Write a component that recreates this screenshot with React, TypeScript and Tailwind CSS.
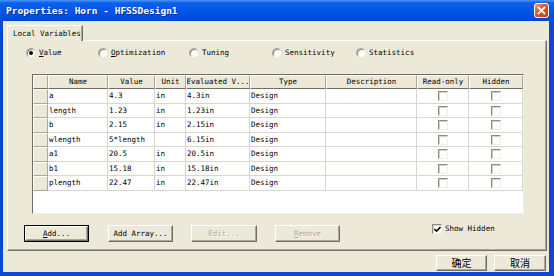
import React from "react";

const mono = "font-['DejaVu_Sans_Mono','Liberation_Mono',monospace]";

const cols = "grid-cols-[15px_60px_47px_31px_64px_76px_91px_52px_54px]";

const rows = [
  ["a", "4.3", "in", "4.3in", "Design"],
  ["length", "1.23", "in", "1.23in", "Design"],
  ["b", "2.15", "in", "2.15in", "Design"],
  ["wlength", "5*length", "", "6.15in", "Design"],
  ["a1", "20.5", "in", "20.5in", "Design"],
  ["b1", "15.18", "in", "15.18in", "Design"],
  ["plength", "22.47", "in", "22.47in", "Design"],
];

const rowHeights = ["h-[15px]", "h-[14px]", "h-[15px]", "h-[14px]", "h-[15px]", "h-[14px]", "h-[15px]"];

const headers = ["Name", "Value", "Unit", "Evaluated V...", "Type", "Description", "Read-only", "Hidden"];

const Radio = ({ label, u, checked, width }: { label: string; u?: boolean; checked?: boolean; width: string }) => (
  <div className={`flex items-center ${width}`}>
    <div className="w-[10px] h-[10px] rounded-full bg-white border border-t-[#ACA899] border-l-[#ACA899] border-r-[#E8E6DC] border-b-[#E8E6DC] shadow-[inset_1px_1px_0_#8E8C80] flex items-center justify-center">
      {checked && <div className="w-[4px] h-[4px] rounded-full bg-black" />}
    </div>
    <span className="ml-[2px] pl-[1px] text-black">
      {u ? (
        <>
          <span className="underline">{label[0]}</span>
          {label.slice(1)}
        </>
      ) : (
        label
      )}
    </span>
  </div>
);

const CheckBox = ({ checked, size = "w-[10px] h-[10px]" }: { checked?: boolean; size?: string }) => (
  <div className={`${size} bg-white border border-t-[#8E8C80] border-l-[#8E8C80] border-r-[#F0EEE6] border-b-[#F0EEE6] shadow-[inset_1px_1px_0_#D4D0C8] flex items-center justify-center`}>
    {checked && (
      <svg width="7" height="7" viewBox="0 0 7 7">
        <path d="M0.5 3 L2.5 5 L6.5 1" stroke="black" strokeWidth="1.6" fill="none" />
      </svg>
    )}
  </div>
);

const Button = ({ children, disabled, isDefault, w = "w-[65px]", h = "h-[17px]" }: { children: React.ReactNode; disabled?: boolean; isDefault?: boolean; w?: string; h?: string }) => {
  const inner = (
    <div
      className={`h-full w-full flex items-center justify-center bg-[#ECE9D8] border border-t-white border-l-white border-r-[#716F64] border-b-[#716F64] shadow-[inset_-1px_-1px_0_#ACA899] ${
        disabled ? "text-[#ACA899] [text-shadow:1px_1px_0_#fff]" : "text-black"
      }`}
    >
      {children}
    </div>
  );
  if (isDefault) {
    return <div className={`${w} ${h} border border-black`}>{inner}</div>;
  }
  return <div className={`${w} ${h}`}>{inner}</div>;
};

export default function App() {
  return (
    <div className={`w-[554px] h-[276px] bg-[#0A47D8] flex flex-col overflow-hidden ${mono} text-[7.5px] leading-none`}>
      {/* title bar */}
      <div className="h-[21px] flex items-center bg-[linear-gradient(#4b95fb_0%,#0c60ea_14%,#0055e6_55%,#0049d8_100%)]">
        <span className="ml-[6px] mt-[1px] text-white font-bold text-[9.5px] [text-shadow:1px_1px_0_#0a2f8f]">
          Properties: Horn - HFSSDesign1
        </span>
        <div className="ml-auto mr-[5px] w-[15px] h-[15px] rounded-[3px] border border-white bg-[linear-gradient(135deg,#f39a7c,#e0532d_45%,#c8381a)] flex items-center justify-center">
          <svg width="9" height="9" viewBox="0 0 9 9">
            <path d="M1.5 1.5 L7.5 7.5 M7.5 1.5 L1.5 7.5" stroke="white" strokeWidth="1.8" strokeLinecap="square" />
          </svg>
        </div>
      </div>

      {/* body */}
      <div className="flex-1 ml-[3px] mr-[5px] mb-[4px] bg-[#ECE9D8] flex flex-col">
        {/* tab strip */}
        <div className="pl-[4px] pt-[4px] flex">
          <div className="relative z-10 w-[76px] h-[16px] -mb-[1px] bg-[#ECE9D8] border-t border-l border-r border-t-white border-l-white border-r-[#716F64] rounded-tl-[2px] shadow-[inset_-1px_0_0_#ACA899] flex items-center pl-[5px] text-black">
            Local Variables
          </div>
        </div>

        {/* panel */}
        <div className="ml-[4px] w-[540px] h-[211px] border border-t-white border-l-white border-r-[#716F64] border-b-[#716F64] shadow-[inset_-1px_-1px_0_#ACA899] flex flex-col">
          {/* radios */}
          <div className="mt-[6px] pl-[18px] h-[11px] flex items-center">
            <Radio label="Value" u checked width="w-[72px]" />
            <Radio label="Optimization" u width="w-[91px]" />
            <Radio label="Tuning" width="w-[83px]" />
            <Radio label="Sensitivity" width="w-[84px]" />
            <Radio label="Statistics" width="w-[84px]" />
          </div>

          {/* table */}
          <div className="mt-[16px] ml-[24px] w-[492px] h-[140px] bg-white border border-t-[#716F64] border-l-[#716F64] border-r-[#F1EFE2] border-b-[#F1EFE2] overflow-hidden">
            <div className={`grid ${cols} h-[14px]`}>
              <div className="bg-[#ECE9D8] border-t border-l border-t-white border-l-white border-r border-b border-r-[#ACA899] border-b-[#716F64]" />
              {headers.map((h) => (
                <div
                  key={h}
                  className="bg-[#ECE9D8] border-t border-l border-t-white border-l-white border-r border-b border-r-[#ACA899] border-b-[#716F64] flex items-center justify-center whitespace-nowrap overflow-hidden text-black"
                >
                  {h}
                </div>
              ))}
            </div>
            {rows.map((r, i) => (
              <div key={i} className={`grid ${cols} ${rowHeights[i]}`}>
                <div className="bg-[#ECE9D8] border-t border-l border-t-white border-l-white border-r border-b border-r-[#ACA899] border-b-[#ACA899]" />
                {r.map((c, j) => (
                  <div
                    key={j}
                    className="border-r border-b border-[#D8D6CE] flex items-center pl-[1px] whitespace-nowrap overflow-hidden text-black"
                  >
                    {c}
                  </div>
                ))}
                <div className="border-r border-b border-[#D8D6CE]" />
                <div className="border-r border-b border-[#D8D6CE] flex items-center justify-center">
                  <CheckBox />
                </div>
                <div className="border-r border-b border-[#D8D6CE] flex items-center justify-center">
                  <CheckBox />
                </div>
              </div>
            ))}
          </div>

          {/* buttons */}
          <div className="mt-[11px] ml-[16px] flex items-start">
            <Button isDefault>
              <span>
                <span className="underline">A</span>dd...
              </span>
            </Button>
            <div className="ml-[19px]">
              <Button>Add Array...</Button>
            </div>
            <div className="ml-[18px]">
              <Button disabled w="w-[66px]">Edit...</Button>
            </div>
            <div className="ml-[18px]">
              <Button disabled>
                <span>
                  <span className="underline">R</span>emove
                </span>
              </Button>
            </div>
            <div className="ml-[92px] mt-[-1px] flex items-center">
              <CheckBox checked size="w-[10px] h-[10px]" />
              <span className="ml-[3px] text-black">Show Hidden</span>
            </div>
          </div>
        </div>

        {/* ok / cancel */}
        <div className="mt-[4px] pr-[3px] flex justify-end gap-[7px] font-['Noto_Sans_CJK_SC',sans-serif] text-[10px]">
          <Button w="w-[51px]" h="h-[16px]">确定</Button>
          <Button w="w-[52px]" h="h-[16px]">取消</Button>
        </div>
      </div>
    </div>
  );
}
